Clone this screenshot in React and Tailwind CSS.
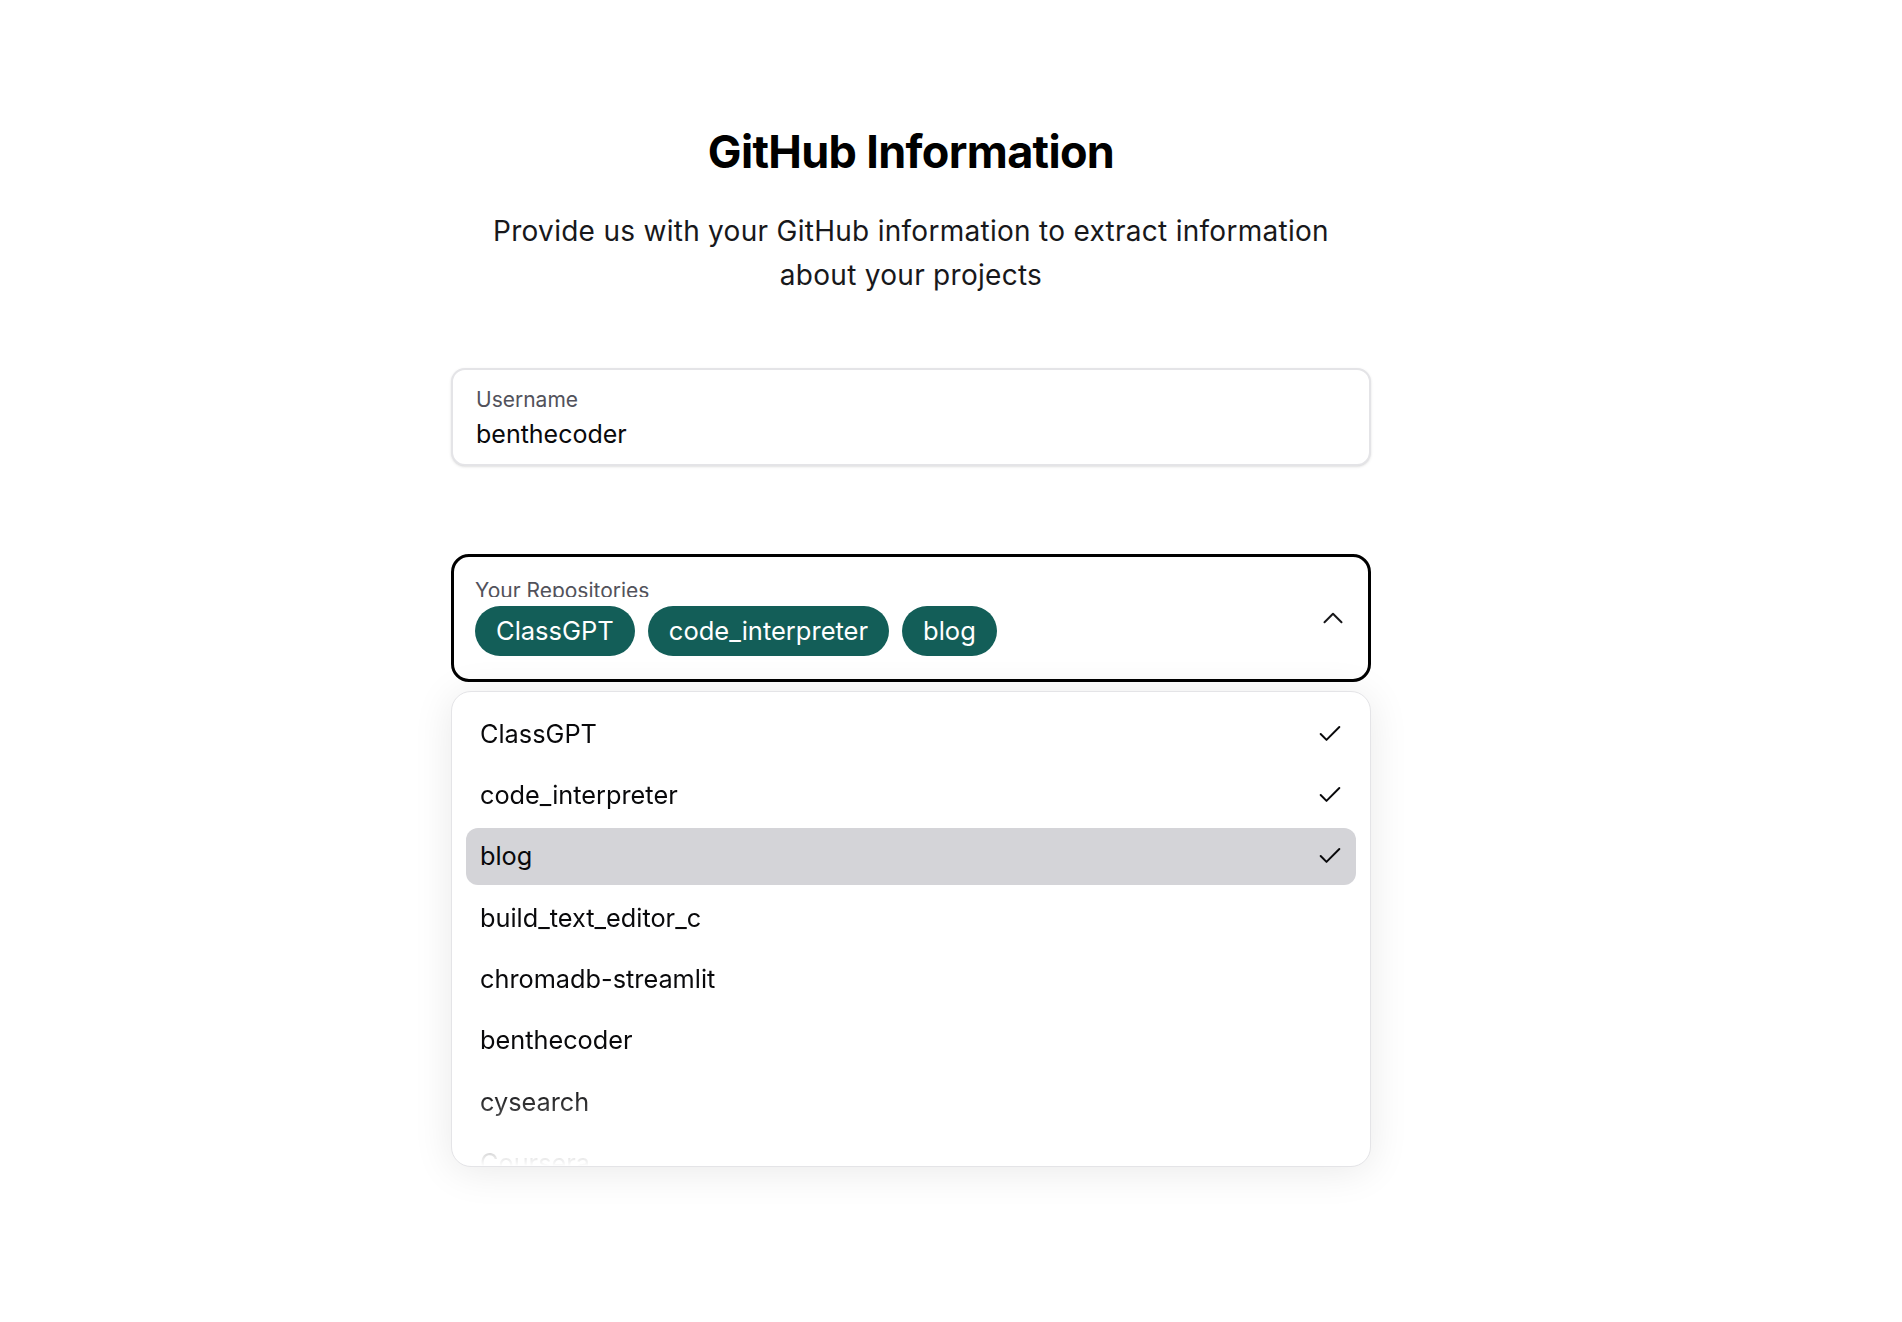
import { useState } from 'react';

const repos = [
  'ClassGPT',
  'code_interpreter',
  'blog',
  'build_text_editor_c',
  'chromadb-streamlit',
  'benthecoder',
  'cysearch',
  'Coursera',
];

function CheckIcon() {
  return (
    <svg width="28" height="28" viewBox="0 0 24 24" fill="none" stroke="currentColor" strokeWidth="1.7" strokeLinecap="round" strokeLinejoin="round">
      <path d="M20 6 9 17l-5-5" />
    </svg>
  );
}

function ChevronUp() {
  return (
    <svg width="34" height="34" viewBox="0 0 24 24" fill="none" stroke="currentColor" strokeWidth="1.4" strokeLinecap="round" strokeLinejoin="round">
      <path d="m18 15-6-6-6 6" />
    </svg>
  );
}

export default function App() {
  const [selected] = useState(['ClassGPT', 'code_interpreter', 'blog']);
  const [active] = useState('blog');

  return (
    <div className="min-h-screen bg-white font-['Inter',sans-serif] text-[#09090b] flex justify-center pr-[80px]">
      <div className="w-[920px] pt-[125px] flex flex-col items-center">
        <h1 className="text-[45px] leading-[54px] font-bold tracking-[-0.015em] text-black">GitHub Information</h1>
        <p className="mt-[30px] w-[880px] text-center text-[28px] leading-[44px] tracking-[0.01em] text-[#18181b]">
          Provide us with your GitHub information to extract information about your projects
        </p>

        {/* username */}
        <div className="mt-[71px] w-full rounded-[14px] border-2 border-[#e4e4e7] bg-white px-[23px] pt-[18px] pb-[14px] shadow-sm">
          <div className="text-[21px] leading-[24px] text-[#52525b]">Username</div>
          <div className="mt-[6px] text-[25px] leading-[32px] text-[#09090b]">benthecoder</div>
        </div>

        {/* repositories */}
        <div className="mt-[88px] w-full rounded-[18px] border-[3px] border-black bg-white pl-[21px] pr-[18px] pt-[19px] pb-[23px] flex items-start">
          <div className="flex-1">
            <div className="h-[21px] overflow-hidden text-[21px] leading-[29px] text-[#52525b]">Your Repositories</div>
            <div className="mt-[9px] flex gap-[13px]">
              {selected.map((r) => (
                <span key={r} className="h-[50px] rounded-full bg-[#135e58] px-[21px] flex items-center text-[25.5px] text-white">
                  {r}
                </span>
              ))}
            </div>
          </div>
          <div className="mt-[25px] text-[#18181b]">
            <ChevronUp />
          </div>
        </div>

        {/* dropdown */}
        <div className="mt-[9px] w-full h-[476px] overflow-hidden rounded-[20px] border border-[#e4e4e7] bg-white shadow-[0_4px_40px_rgba(0,0,0,0.09)] px-[14px] pt-[13px]">
          <div className="h-[461px] overflow-hidden flex flex-col gap-[4.4px] [mask-image:linear-gradient(to_bottom,black_82%,rgba(0,0,0,0.78)_88%,rgba(0,0,0,0.22)_96%,transparent_100%)]">
            {repos.map((r) => (
              <div
                key={r}
                className={
                  'h-[57px] shrink-0 rounded-[12px] pl-[14px] pr-[12px] flex items-center justify-between text-[25.3px] text-[#09090b] ' +
                  (r === active ? 'bg-[#d4d4d8]' : '')
                }
              >
                <span>{r}</span>
                {selected.includes(r) && <CheckIcon />}
              </div>
            ))}
          </div>
        </div>
      </div>
    </div>
  );
}
